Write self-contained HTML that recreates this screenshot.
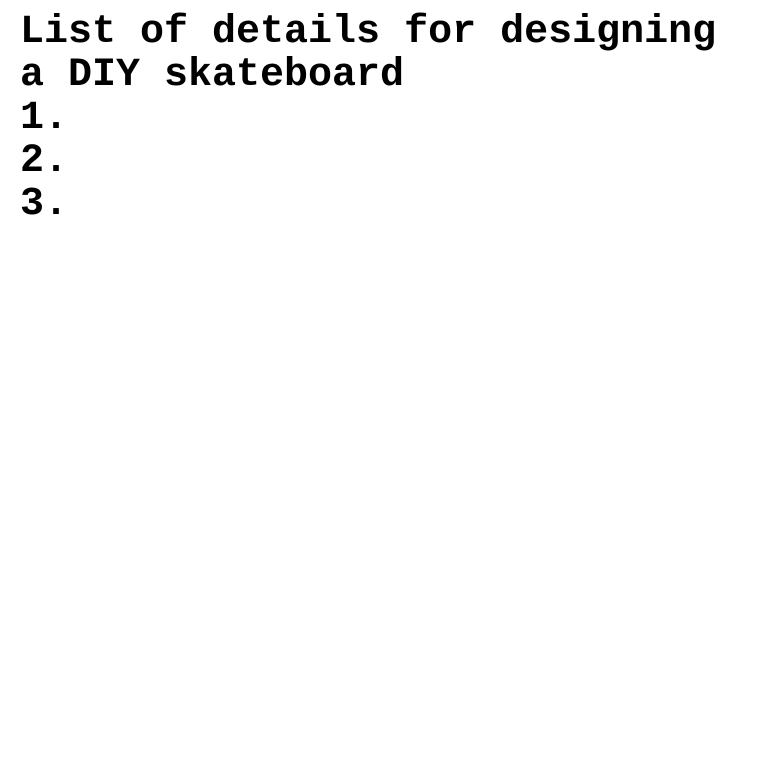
<!DOCTYPE html>
<html><head><meta charset="utf-8"><style>
html,body{margin:0;padding:0;background:#fff;width:760px;height:760px;overflow:hidden}
div{position:absolute;left:20px;top:11px;font-family:"Liberation Mono",monospace;font-weight:bold;font-size:40px;line-height:43px;color:#000;white-space:pre}
</style></head><body>
<div>List of details for designing
a DIY skateboard
1.
2.
3.</div>
</body></html>
